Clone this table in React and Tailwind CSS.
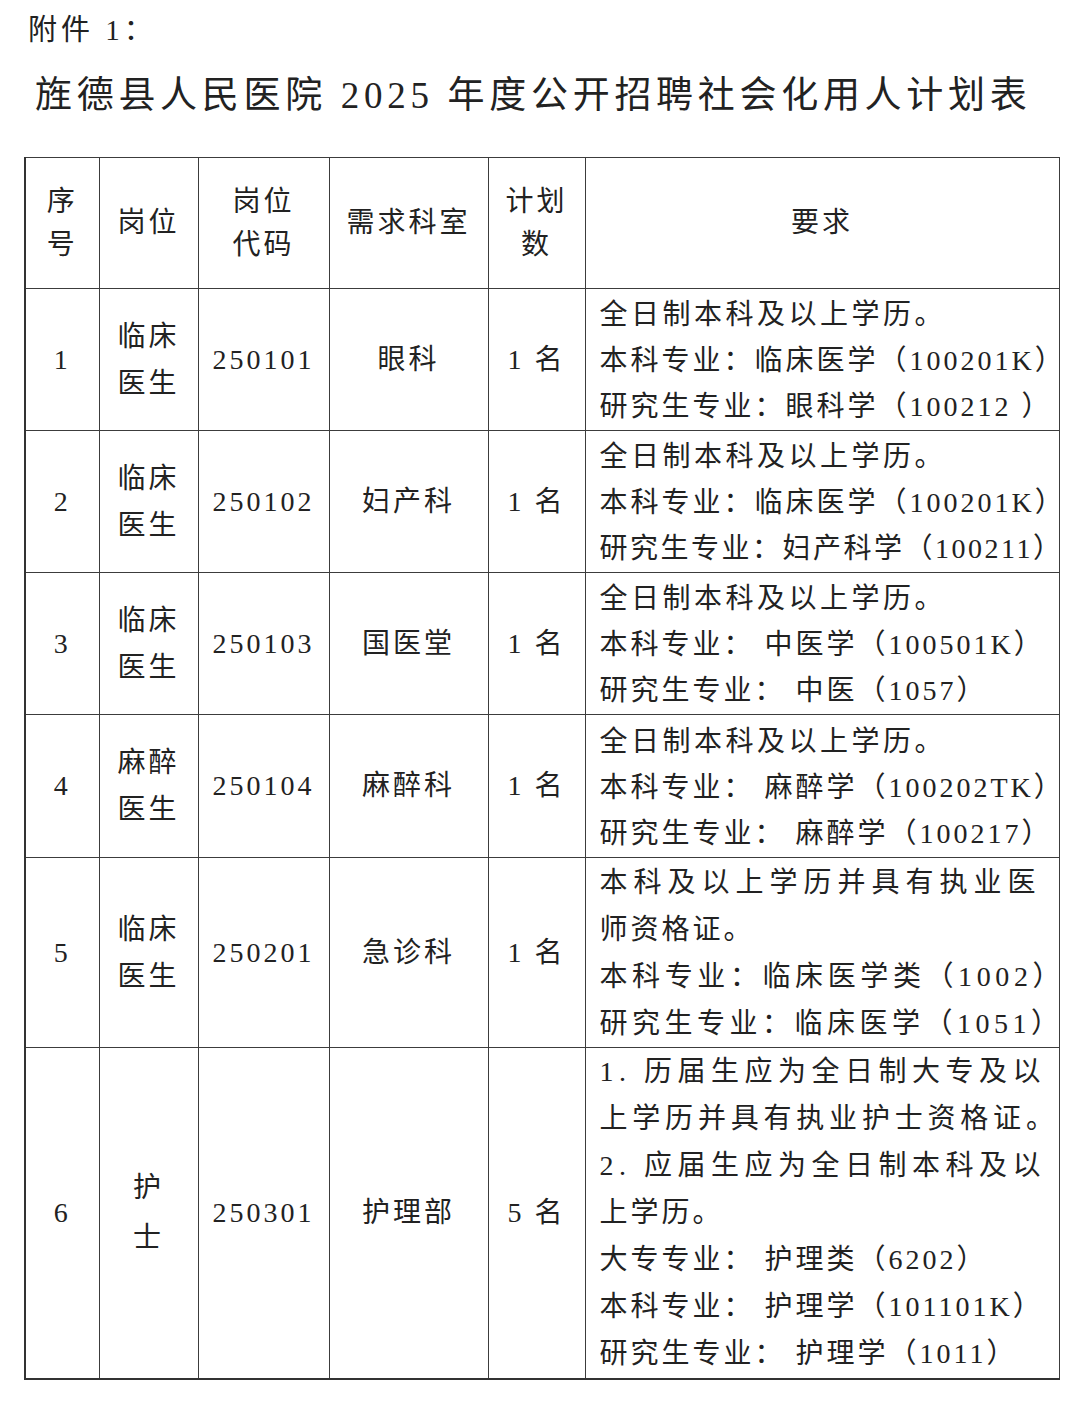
const rows = [
  {
    no: '1',
    post: ['临床', '医生'],
    code: '250101',
    dept: '眼科',
    num: '1 名',
    h: 'h-[142px]',
    req: [
      { t: '全日制本科及以上学历。', tr: 'tracking-[3.5px]' },
      { t: '本科专业：临床医学（100201K）' },
      { t: '研究生专业：眼科学（100212 ）' },
    ],
  },
  {
    no: '2',
    post: ['临床', '医生'],
    code: '250102',
    dept: '妇产科',
    num: '1 名',
    h: 'h-[142px]',
    req: [
      { t: '全日制本科及以上学历。', tr: 'tracking-[3.5px]' },
      { t: '本科专业：临床医学（100201K）' },
      { t: '研究生专业：妇产科学（100211）', tr: 'tracking-[2.5px]' },
    ],
  },
  {
    no: '3',
    post: ['临床', '医生'],
    code: '250103',
    dept: '国医堂',
    num: '1 名',
    h: 'h-[142px]',
    req: [
      { t: '全日制本科及以上学历。', tr: 'tracking-[3.5px]' },
      { t: '本科专业： 中医学（100501K）' },
      { t: '研究生专业： 中医（1057）' },
    ],
  },
  {
    no: '4',
    post: ['麻醉', '医生'],
    code: '250104',
    dept: '麻醉科',
    num: '1 名',
    h: 'h-[143px]',
    req: [
      { t: '全日制本科及以上学历。', tr: 'tracking-[3.5px]' },
      { t: '本科专业： 麻醉学（100202TK）' },
      { t: '研究生专业： 麻醉学（100217）' },
    ],
  },
  {
    no: '5',
    post: ['临床', '医生'],
    code: '250201',
    dept: '急诊科',
    num: '1 名',
    h: 'h-[190px]',
    req: [
      { t: '本科及以上学历并具有执业医', tr: 'tracking-[6px]' },
      { t: '师资格证。' },
      { t: '本科专业：临床医学类（1002）', tr: 'tracking-[4.6px]' },
      { t: '研究生专业：临床医学（1051）', tr: 'tracking-[4.5px]' },
    ],
  },
  {
    no: '6',
    post: ['护', '士'],
    code: '250301',
    dept: '护理部',
    num: '5 名',
    h: 'h-[331px]',
    tall: true,
    req: [
      { t: '1. 历届生应为全日制大专及以', tr: 'tracking-[5.5px]' },
      { t: '上学历并具有执业护士资格证。', tr: 'tracking-[4.8px]' },
      { t: '2. 应届生应为全日制本科及以', tr: 'tracking-[5.5px]' },
      { t: '上学历。' },
      { t: '大专专业： 护理类（6202）' },
      { t: '本科专业： 护理学（101101K）' },
      { t: '研究生专业： 护理学（1011）' },
    ],
  },
];

const cell = 'border border-[#3c3c3c] text-center align-middle p-0';

export default function App() {
  return (
    <div className="w-[1080px] min-h-[1414px] bg-white text-[#222] font-['Liberation_Serif','Noto_Sans_CJK_SC',serif]">
      <div className="pt-[13px] pl-[28px] text-[29px] leading-[35px] tracking-[4px]">附件 1：</div>
      <h1 className="mt-[26px] pl-[35px] text-[37px] leading-[44px] tracking-[4.7px] font-normal whitespace-nowrap">
        旌德县人民医院 2025 年度公开招聘社会化用人计划表
      </h1>

      <table className="mt-[39px] ml-[24px] w-[1034px] table-fixed border-collapse border-b-2 border-l-2 border-[#333] text-[28px] tracking-[3px]">
        <colgroup>
          <col className="w-[74px]" />
          <col className="w-[99px]" />
          <col className="w-[131px]" />
          <col className="w-[159px]" />
          <col className="w-[97px]" />
          <col className="w-[474px]" />
        </colgroup>
        <thead>
          <tr>
            <th className={`${cell} h-[131px] font-normal leading-[43px]`}>
              <div>序</div>
              <div>号</div>
            </th>
            <th className={`${cell} font-normal`}>岗位</th>
            <th className={`${cell} font-normal leading-[43px]`}>
              <div>岗位</div>
              <div>代码</div>
            </th>
            <th className={`${cell} font-normal`}>需求科室</th>
            <th className={`${cell} font-normal leading-[43px]`}>
              <div>计划</div>
              <div>数</div>
            </th>
            <th className={`${cell} font-normal`}>要求</th>
          </tr>
        </thead>
        <tbody>
          {rows.map((r) => (
            <tr key={r.no}>
              <td className={`${cell} ${r.h}`}>{r.no}</td>
              <td className={`${cell} ${r.tall ? 'leading-[50px]' : 'leading-[47px]'}`}>
                {r.post.map((p) => (
                  <div key={p}>{p}</div>
                ))}
              </td>
              <td className={cell}>{r.code}</td>
              <td className={cell}>{r.dept}</td>
              <td className={cell}>{r.num}</td>
              <td
                className={`border border-[#3c3c3c] align-middle text-left p-0 pl-[14px] ${
                  r.req.length === 3 ? 'pt-[3px] leading-[46px]' : 'leading-[47px]'
                }`}
              >
                {r.req.map((l, i) => (
                  <div key={i} className={`whitespace-nowrap ${l.tr || ''}`}>
                    {l.t}
                  </div>
                ))}
              </td>
            </tr>
          ))}
        </tbody>
      </table>
    </div>
  );
}
